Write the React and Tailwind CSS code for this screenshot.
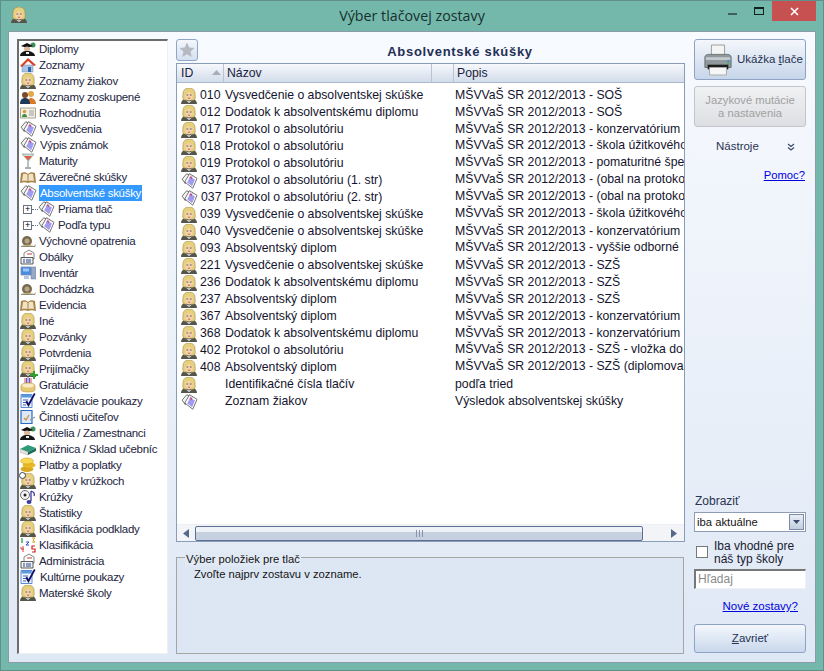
import React from 'react';

const Lady = () => (
    <svg viewBox="0 0 16 16" className="w-4 h-4 shrink-0">
        <path d="M0 16c0-3 2-5 4.500-5h7c2.500 0 4.500 2 4.500 5z" fill="#55554c" />
        <path d="M8 0C4 0 2 2.500 2 5.500c0 2.500-.7 4 .3 6 1.500 1 3 .5 5.700.5s4.700.8 5.700-.5c1-2 .3-3.500.3-6C14 2.500 12 0 8 0z" fill="#e6d07c" stroke="#9a8846" strokeWidth="0.6" />
        <path d="M4.200 6c1.500-.3 2.800-1.300 3.600-2.500.8 1.300 2.300 2.200 4 2.500.2 3-1.400 6.500-3.800 6.500S4 9 4.200 6z" fill="#f4d2aa" />
        <path d="M5.500 7h1.700M8.900 7h1.700" stroke="#3a3a3a" strokeWidth="0.8" />
        <path d="M7 10.200h2.200" stroke="#b04848" strokeWidth="0.8" />
        <path d="M5 12.500l3 2.500 3-2.500-3 1z" fill="#f2f2f2" />
    </svg>
);

const Tag = () => (
    <svg viewBox="0 0 17 17" className="w-[17px] h-4 shrink-0">
        <path d="M.7 6.500L5.500.8l3.500 1.500-5 9z" fill="#f4f4f4" stroke="#5a5a5a" strokeWidth="0.9" />
        <path d="M3.500 9.500L8.500.7l8 5-4.500 10.500z" fill="#fff" stroke="#5a5a5a" strokeWidth="0.9" />
        <path d="M6 9.800L9.300 4l5 3-3 7z" fill="#a29cf0" />
        <path d="M9.500 2.800l1.300 3.700M8.300 5.300l3.500-1.200" stroke="#b83a78" strokeWidth="0.8" />
    </svg>
);

const Grad = () => (
    <svg viewBox="0 0 16 16" className="w-4 h-4 shrink-0">
        <circle cx="13" cy="4" r="2.500" fill="#3f8f5a" />
        <path d="M1 5l6-3 6 3-6 2z" fill="#111" />
        <ellipse cx="7" cy="8" rx="3" ry="2.500" fill="#d8b898" />
        <path d="M0 15c0-3 3-5 7-5s8 2 8 5z" fill="#161616" />
        <path d="M6 11h3v2H6z" fill="#eee" />
    </svg>
);

const House = () => (
    <svg viewBox="0 0 16 16" className="w-4 h-4 shrink-0">
        <path d="M2 8h11v7H2z" fill="#a9c4e4" stroke="#6c88ac" strokeWidth="0.5" />
        <path d="M0 9l8-8 8 7-2 1-6-5-6 6z" fill="#d9402c" />
        <path d="M8 10h3v5H8z" fill="#2c62a8" />
    </svg>
);

const Group = () => (
    <svg viewBox="0 0 16 16" className="w-4 h-4 shrink-0">
        <circle cx="11" cy="5" r="3" fill="#dfa84a" />
        <path d="M7 15c0-4 2-6 4-6s5 2 5 6z" fill="#d97a2a" />
        <circle cx="5" cy="6" r="3" fill="#7a4a2a" />
        <path d="M0 15c0-4 2-6 5-6s5 2 5 6z" fill="#1e3a5a" />
    </svg>
);

const Card = () => (
    <svg viewBox="0 0 16 16" className="w-4 h-4 shrink-0">
        <path d="M0.500 3h15v10H.5z" fill="#f2efe4" stroke="#a8a493" />
        <circle cx="4.500" cy="6.500" r="1.800" fill="#d9a03a" />
        <path d="M2 12c0-2 1-3 2.500-3S7 10 7 12z" fill="#3f8f3a" />
        <path d="M9 6h5M9 8h5M9 10h5" stroke="#a0a0a0" />
    </svg>
);

const Glass = () => (
    <svg viewBox="0 0 16 16" className="w-4 h-4 shrink-0">
        <path d="M2 1h12L8.500 8z" fill="#cfdcd8" stroke="#7a8a88" strokeWidth="0.6" />
        <path d="M4 3h8L8 7.500z" fill="#d9604a" />
        <path d="M8 8v6" stroke="#8a9a98" strokeWidth="1.200" />
        <path d="M5 15h6" stroke="#8a9a98" strokeWidth="1.500" />
    </svg>
);

const Book = () => (
    <svg viewBox="0 0 16 16" className="w-4 h-4 shrink-0">
        <path d="M0 14l1-10c3-1 5-1 7 1 2-2 4-2 7-1l1 10c-3-1-6-1-8 0-2-1-5-1-8 0z" fill="#a8834a" />
        <path d="M2 12l1-7c2-.5 4-.5 4.500 1v6c-1.500-.5-3.500-.5-5.500 0zM14 12l-1-7c-2-.5-4-.5-4.500 1v6c1.500-.5 3.500-.5 5.500 0z" fill="#f0e4c4" />
    </svg>
);

const Snail = () => (
    <svg viewBox="0 0 16 16" className="w-4 h-4 shrink-0">
        <path d="M1 13h13l2-2-1 3H1z" fill="#8a8a7a" />
        <circle cx="7" cy="8" r="5" fill="#7a6a50" />
        <circle cx="7" cy="8" r="2.500" fill="#b8a888" />
        <path d="M2 13c2-1 8-1 11 0" stroke="#c8b878" strokeWidth="1" fill="none" />
    </svg>
);

const Mail = () => (
    <svg viewBox="0 0 16 16" className="w-4 h-4 shrink-0">
        <path d="M4 7V4l5-3 5 3v6H4z" fill="#fff" stroke="#555" strokeWidth="0.7" />
        <path d="M7 5h5" stroke="#c04040" />
        <path d="M1 8.500h12v6.500H1z" fill="#eef0f4" stroke="#333" strokeWidth="0.8" />
        <path d="M3 11h2M6 11h5M3 13h2M6 13h5" stroke="#2a4a8a" />
    </svg>
);

const Pc = () => (
    <svg viewBox="0 0 16 16" className="w-4 h-4 shrink-0">
        <path d="M11 2h5v12h-5z" fill="#9aa8c8" stroke="#6a789a" strokeWidth="0.5" />
        <path d="M1 2h10v8H1z" fill="#4a8ae0" stroke="#7a8aaa" strokeWidth="0.8" />
        <path d="M3 3.500h6v3H3z" fill="#9ac8f4" />
        <path d="M4 11h5v3H4z" fill="#b8c4dc" />
    </svg>
);

const LadyPlus = () => (
    <div className="relative w-4 h-4 shrink-0">
        <Lady />
        <svg viewBox="0 0 8 8" className="absolute -right-0.5 -bottom-0.5 w-2 h-2">
            <path d="M3 0h2v3h3v2H5v3H3V5H0V3h3z" fill="#2ea02e" />
        </svg>
    </div>
);

const Cake = () => (
    <svg viewBox="0 0 16 16" className="w-4 h-4 shrink-0">
        <path d="M5 1v5M8 0v6M11 1v5" stroke="#d04a6a" />
        <path d="M6.500 1v5M9.500 1v5" stroke="#3a6ad0" />
        <path d="M1 9c0-2 3-3 7-3s7 1 7 3v4c0 1-3 2-7 2s-7-1-7-2z" fill="#e8c870" stroke="#a8883a" strokeWidth="0.5" />
        <ellipse cx="8" cy="8.500" rx="6" ry="2" fill="#f8ecc8" />
    </svg>
);

const CheckDoc = () => (
    <svg viewBox="0 0 16 16" className="w-[17px] h-4 shrink-0">
        <path d="M.5 1.500h11v13H.5z" fill="#f0f4fc" stroke="#5a8ad0" />
        <path d="M1 2h10v2.500H1z" fill="#5a9ae0" />
        <path d="M2.500 7h5M2.500 9.500h4M2.500 12h3" stroke="#4a6ab0" />
        <path d="M5 9l3 5 7-13-1.500-1L8 10 6.500 7.500z" fill="#10106a" />
    </svg>
);

const Board = () => (
    <svg viewBox="0 0 16 16" className="w-4 h-4 shrink-0">
        <path d="M1 1.500h11v13H1z" fill="#dce8f8" stroke="#2a6ac0" strokeWidth="1.200" />
        <path d="M4 9l2 2 3-5" fill="none" stroke="#d0902a" strokeWidth="1.200" />
        <path d="M10 11l5-3" stroke="#8a9ab0" strokeWidth="1.200" />
    </svg>
);

const Books = () => (
    <svg viewBox="0 0 16 16" className="w-4 h-4 shrink-0">
        <path d="M0 8l8-4 8 3-8 4z" fill="#2e9a7a" />
        <path d="M0 8l8 3v3l-8-3z" fill="#e8e8e0" stroke="#7a8a88" strokeWidth="0.4" />
        <path d="M8 11l8-4v3l-8 4z" fill="#1e6a5a" />
    </svg>
);

const Coins = () => (
    <svg viewBox="0 0 16 16" className="w-4 h-4 shrink-0">
        <ellipse cx="7" cy="12" rx="6.500" ry="3" fill="#d8a820" />
        <ellipse cx="9" cy="8" rx="6.500" ry="3" fill="#e8b828" />
        <ellipse cx="7" cy="4" rx="6.500" ry="3" fill="#f8d850" stroke="#c89818" strokeWidth="0.5" />
    </svg>
);

const BallLady = () => (
    <div className="relative w-4 h-4 shrink-0">
        <Lady />
        <div className="absolute -left-px -top-px w-[7px] h-[7px] rounded-full bg-white border border-gray-700"></div>
    </div>
);

const Music = () => (
    <svg viewBox="0 0 16 16" className="w-4 h-4 shrink-0">
        <circle cx="5" cy="6" r="4.500" fill="#f4f4f4" stroke="#333" strokeWidth="0.7" />
        <circle cx="5" cy="6" r="1.500" fill="#222" />
        <path d="M11 2c3 1 4 3 3 5M11 2v10" fill="none" stroke="#3a3a9a" strokeWidth="1.300" />
        <ellipse cx="9" cy="13" rx="2.500" ry="2" fill="#3a3a9a" />
    </svg>
);

const Marks = () => (
    <svg viewBox="0 0 16 16" className="w-4 h-4 shrink-0">
        <path d="M2 1v5" stroke="#20a040" strokeWidth="1.300" />
        <path d="M6 5h3l-3 3h3" fill="none" stroke="#2050d0" />
        <path d="M12 1h3l-2 2 2 2h-3" fill="none" stroke="#d8a020" />
        <path d="M1 10v2h3M3 9v6" fill="none" stroke="#d04040" />
        <path d="M15 9h-3v3h3v3h-3" fill="none" stroke="#d02020" strokeWidth="1.200" />
    </svg>
);

const TREE = [
    ['Diplomy', Grad], ['Zoznamy', House], ['Zoznamy žiakov', Lady], ['Zoznamy zoskupené', Group], ['Rozhodnutia', Card],
    ['Vysvedčenia', Tag], ['Výpis známok', Tag], ['Maturity', Glass], ['Záverečné skúšky', Book], ['Absolventské skúšky', Tag, 'selected'],
    ['Priama tlač', Tag, 'child'], ['Podľa typu', Tag, 'child'],
    ['Výchovné opatrenia', Snail], ['Obálky', Mail], ['Inventár', Pc], ['Dochádzka', Snail], ['Evidencia', Book], ['Iné', Lady],
    ['Pozvánky', Lady], ['Potvrdenia', Lady], ['Prijímačky', LadyPlus], ['Gratulácie', Cake], ['Vzdelávacie poukazy', CheckDoc],
    ['Činnosti učiteľov', Board], ['Učitelia / Zamestnanci', Grad], ['Knižnica / Sklad učebníc', Books], ['Platby a poplatky', Coins],
    ['Platby v krúžkoch', BallLady], ['Krúžky', Music], ['Štatistiky', Lady], ['Klasifikácia podklady', Lady], ['Klasifikácia', Marks],
    ['Administrácia', Mail], ['Kultúrne poukazy', CheckDoc], ['Materské školy', Lady],
];

const P = 'MŠVVaŠ SR 2012/2013 - ';
// last field: the description sits a bit higher than its row in the original
const ROWS = [
    ['010', 'Vysvedčenie o absolventskej skúške', P + 'SOŠ', Lady],
    ['012', 'Dodatok k absolventskému diplomu', P + 'SOŠ', Lady],
    ['017', 'Protokol o absolutóriu', P + 'konzervatórium', Lady],
    ['018', 'Protokol o absolutóriu', P + 'škola úžitkového', Lady, true],
    ['019', 'Protokol o absolutóriu', P + 'pomaturitné špe', Lady, true],
    ['037', 'Protokol o absolutóriu (1. str)', P + '(obal na protoko', Tag, true],
    ['037', 'Protokol o absolutóriu (2. str)', P + '(obal na protoko', Tag, true],
    ['039', 'Vysvedčenie o absolventskej skúške', P + 'škola úžitkového', Lady, true],
    ['040', 'Vysvedčenie o absolventskej skúške', P + 'konzervatórium', Lady],
    ['093', 'Absolventský diplom', P + 'vyššie odborné', Lady, true],
    ['221', 'Vysvedčenie o absolventskej skúške', P + 'SZŠ', Lady],
    ['236', 'Dodatok k absolventskému diplomu', P + 'SZŠ', Lady],
    ['237', 'Absolventský diplom', P + 'SZŠ', Lady],
    ['367', 'Absolventský diplom', P + 'konzervatórium', Lady],
    ['368', 'Dodatok k absolventskému diplomu', P + 'konzervatórium', Lady],
    ['402', 'Protokol o absolutóriu', P + 'SZŠ - vložka do', Lady, true],
    ['408', 'Absolventský diplom', P + 'SZŠ (diplomova', Lady, true],
    ['', 'Identifikačné čísla tlačív', 'podľa tried', Lady],
    ['', 'Zoznam žiakov', 'Výsledok absolventskej skúšky', Tag],
];

const TreeRow = ({ label, Icon, kind }) => {
    const child = kind === 'child';
    return (
        <div className={`h-4 flex items-center ${child ? 'pl-[4px]' : 'pl-px'}`}>
            {child && (
                <>
                    <span className="w-[9px] h-[9px] border border-gray-500 bg-white flex items-center justify-center text-[9px] leading-none text-black shrink-0">+</span>
                    <span className="w-[6px] border-t border-dotted border-gray-500 shrink-0"></span>
                </>
            )}
            <Icon />
            <span className={`ml-[2px] px-px leading-4 whitespace-nowrap ${kind === 'selected' ? 'bg-[#3399ff] text-white' : ''}`}>{label}</span>
        </div>
    );
};

const Printer = () => (
    <svg viewBox="0 0 32 36" className="w-[30px] h-[34px] shrink-0">
        <path d="M9 2h14v13H9z" fill="#f4f4f4" stroke="#9a9a9a" />
        <path d="M2 15c0-2 2-3 4-3h20c2 0 4 1 4 3v11H2z" fill="#8f999c" stroke="#6a7274" />
        <path d="M3 15h26v3H3z" fill="#c4cace" />
        <path d="M26 18h2v2h-2z" fill="#3a8ad0" />
        <path d="M26 21h2v2h-2z" fill="#40b060" />
        <path d="M5 23h22v5H5z" fill="#1c1c1c" />
        <path d="M7 26h18v8H7z" fill="#f6f6f6" stroke="#a8a8a8" />
    </svg>
);

export default function App() {
    return (
        <div className="relative w-[824px] h-[671px] bg-[#74b8ac] border border-[#5f8f8a] flex flex-col overflow-hidden text-[12px] text-[#1a2340] font-['Liberation_Sans',Arial,sans-serif]">
            {/* Title bar */}
            <div className="h-[30px] shrink-0 flex items-center justify-center">
                <div className="absolute left-[10px] top-[6px]"><Lady /></div>
                <span className="text-[14.25px] text-[#17302c] font-['Open_Sans',sans-serif] -mt-[1px]">Výber tlačovej zostavy</span>
                <div className="absolute right-[7px] top-0 flex items-start">
                    <span className="w-[9px] h-[2px] bg-[#3f5f5c] mt-[12px] mr-[17px]"></span>
                    <span className="w-[10px] h-[8px] border border-t-[2px] border-[#10201f] mt-[6px] mr-[8px]"></span>
                    <span className="w-[44px] h-[20px] bg-[#c75050] text-white flex items-center justify-center">
                        <svg viewBox="0 0 9 9" className="w-[9px] h-[9px]"><path d="M1 1l7 7M8 1l-7 7" stroke="#fff" strokeWidth="1.600" /></svg>
                    </span>
                </div>
            </div>

            {/* Client area */}
            <div className="ml-[7px] mr-[7px] mb-[7px] flex-1 min-h-0 border border-[#8b9aa8] bg-gradient-to-b from-[#f7fafe] to-[#dfe8f5] flex pl-[8px] pr-[9px] pt-[7px] pb-[8px]">
                {/* Tree */}
                <div className="w-[151px] shrink-0 mr-[8px] bg-white border-t-2 border-l-2 border-t-[#6d6d6d] border-l-[#6d6d6d] border-r border-b border-r-[#f0f0f0] border-b-[#f0f0f0] text-[#1c2440] text-[11.5px] tracking-[-0.3px]">
                    {TREE.map(([label, Icon, kind]) => (
                        <TreeRow key={label} label={label} Icon={Icon} kind={kind} />
                    ))}
                </div>

                {/* Center */}
                <div className="w-[509px] shrink-0 flex flex-col mr-[9px]">
                    <div className="h-[24px] shrink-0 flex items-start">
                        <button className="w-[22px] h-[22px] rounded-[3px] border border-[#8ea6c8] bg-gradient-to-b from-[#f4f7fc] to-[#d5e0ef] flex items-center justify-center shrink-0">
                            <svg viewBox="0 0 16 16" className="w-4 h-4"><path d="M8 .5l2.300 5 5.200.6-3.900 3.500 1.100 5.400L8 12.300 3.300 15l1.100-5.400L.5 6.100l5.200-.6z" fill="#b5bac2" /></svg>
                        </button>
                        <div className="flex-1 text-center font-bold text-[#1f2f55] text-[13px] tracking-[0.7px] leading-[18px] pt-[4px] pl-[37px]">Absolventské skúšky</div>
                    </div>
                    <div className="h-[479px] shrink-0 bg-white border border-[#8b9db5] flex flex-col overflow-hidden">
                        <div className="h-[19px] shrink-0 flex bg-gradient-to-b from-[#f6f8fc] to-[#d3dcea] border-b border-[#a9b8cc] text-[12.25px] leading-[19px]">
                            <div className="w-[47px] pl-[4px] border-r border-[#b8c4d6] relative">ID
                                <svg viewBox="0 0 9 5" className="absolute right-[2px] top-[6px] w-[9px] h-[5px]"><path d="M0 5l4.500-5L9 5z" fill="#a8aeb8" /></svg>
                            </div>
                            <div className="w-[208px] pl-[3px] border-r border-[#b8c4d6]">Názov</div>
                            <div className="w-[22px] border-r border-[#b8c4d6]"></div>
                            <div className="flex-1 pl-[3px]">Popis</div>
                        </div>
                        <div className="flex-1 min-h-0 pt-[4px] text-[12.25px] text-[#14142e] overflow-hidden">
                            {ROWS.map(([id, name, desc, Icon, up], i) => (
                                <div key={i} className="h-[17px] flex items-center whitespace-nowrap">
                                    <span className="w-[48px] shrink-0 flex items-center pl-[4px]">
                                        <Icon />
                                        <span className="ml-[3px]">{id}</span>
                                    </span>
                                    <span className="w-[230px] shrink-0">{name}</span>
                                    <span className={`flex-1 overflow-hidden leading-[17px] ${up ? 'pb-[3px]' : ''}`}>{desc}</span>
                                </div>
                            ))}
                        </div>
                        <div className="h-[17px] shrink-0 flex items-center bg-[#f2f4f8] border-t border-[#eceff4]">
                            <svg viewBox="0 0 6 9" className="w-[6px] h-[9px] ml-[6px] mr-[6px]"><path d="M6 0v9L0 4.500z" fill="#56678a" /></svg>
                            <div className="w-[448px] h-[15px] rounded-[2px] border border-[#5b6f96] bg-gradient-to-b from-[#eff2f6] from-40% to-[#c6d0de] to-40% flex items-center justify-center">
                                <div className="w-[7px] h-[7px] border-x border-[#8a94a8] flex justify-center"><span className="w-px bg-[#8a94a8]"></span></div>
                            </div>
                            <svg viewBox="0 0 6 9" className="w-[6px] h-[9px] ml-auto mr-[7px]"><path d="M0 0v9l6-4.500z" fill="#56678a" /></svg>
                        </div>
                    </div>
                    <div className="relative mt-[15px] flex-1 border border-[#a5a5a5] bg-[#dde7f4] mr-[1px] pl-[17px] pt-[8px] text-[11.25px] text-[#141414]">
                        <span className="absolute left-[8px] -top-[6px] bg-[#e1e9f5] px-px leading-[14px]">Výber položiek pre tlač</span>
                        Zvoľte najprv zostavu v zozname.
                    </div>
                </div>

                {/* Right column */}
                <div className="flex-1 min-w-0 flex flex-col pb-px">
                    <button className="h-[41px] shrink-0 rounded-[3px] border border-[#8ea3c4] bg-gradient-to-b from-[#f4f7fc] via-[#dde6f2] to-[#c7d6ea] flex items-center pl-[8px] text-[11.5px] text-[#233154]">
                        <Printer />
                        <span className="ml-[4px] whitespace-nowrap">Ukážka <span className="underline">t</span>lače</span>
                    </button>
                    <button className="mt-[6px] h-[41px] shrink-0 rounded-[3px] border border-[#c2c6cb] bg-gradient-to-b from-[#f0f1f3] to-[#dedfe2] text-[11.25px] leading-[13px] text-[#a0a0a0]">
                        Jazykové mutácie<br />a nastavenia
                    </button>
                    <div className="mt-[6px] h-[26px] shrink-0 bg-[#f3f7fd] flex items-center pt-px pl-[22px] pr-[11px] text-[11.5px] text-[#2a3350]">
                        <span>Nástroje</span>
                        <svg viewBox="0 0 8 8" className="w-2 h-2 ml-auto"><path d="M1 1l3 2.500L7 1M1 4.500l3 2.500 3-2.500" fill="none" stroke="#3a4a6a" strokeWidth="1.200" /></svg>
                    </div>
                    <a className="mt-[8px] self-end text-[11.25px] text-[#0000e0] underline pr-px">Pomoc?</a>

                    <div className="mt-auto pl-px text-[#2a3350] leading-[18px]">Zobraziť</div>
                    <div className="mt-[2px] h-[20px] shrink-0 border border-[#8e9db5] bg-white flex items-center pl-[2px] text-[11.25px] text-[#141414]">
                        <span>iba aktuálne</span>
                        <span className="ml-auto w-[15px] h-[16px] mr-px border border-[#7c8ca6] bg-gradient-to-b from-[#e8edf5] to-[#c2cede] flex items-center justify-center">
                            <svg viewBox="0 0 7 4" className="w-[7px] h-1"><path d="M0 0h7L3.500 4z" fill="#3a4a6a" /></svg>
                        </span>
                    </div>
                    <label className="mt-[8px] flex items-start text-[12px] text-[#1a1a30] leading-[13px]">
                        <span className="mt-[6px] ml-[2px] w-[12px] h-[12px] border border-[#777] bg-white shrink-0"></span>
                        <span className="ml-[6px]">Iba vhodné pre<br />náš typ školy</span>
                    </label>
                    <div className="mt-[3px] h-[20px] shrink-0 bg-white border-t-2 border-l-2 border-r border-b border-t-[#777] border-l-[#777] border-r-[#eef2f8] border-b-[#eef2f8] pl-[2px] text-[#8a8a8a] leading-[16px]">Hľadaj</div>
                    <a className="mt-[8px] self-end text-[11.5px] leading-[18px] text-[#0000e0] underline pr-[8px]">Nové zostavy?</a>
                    <button className="mt-[9px] h-[29px] shrink-0 rounded-[3px] border border-[#8ea3c4] bg-gradient-to-b from-[#f4f7fc] to-[#c9d8ec] text-[#233154] text-[11.5px]">
                        <span className="underline">Z</span>avrieť
                    </button>
                </div>
            </div>
        </div>
    );
}
